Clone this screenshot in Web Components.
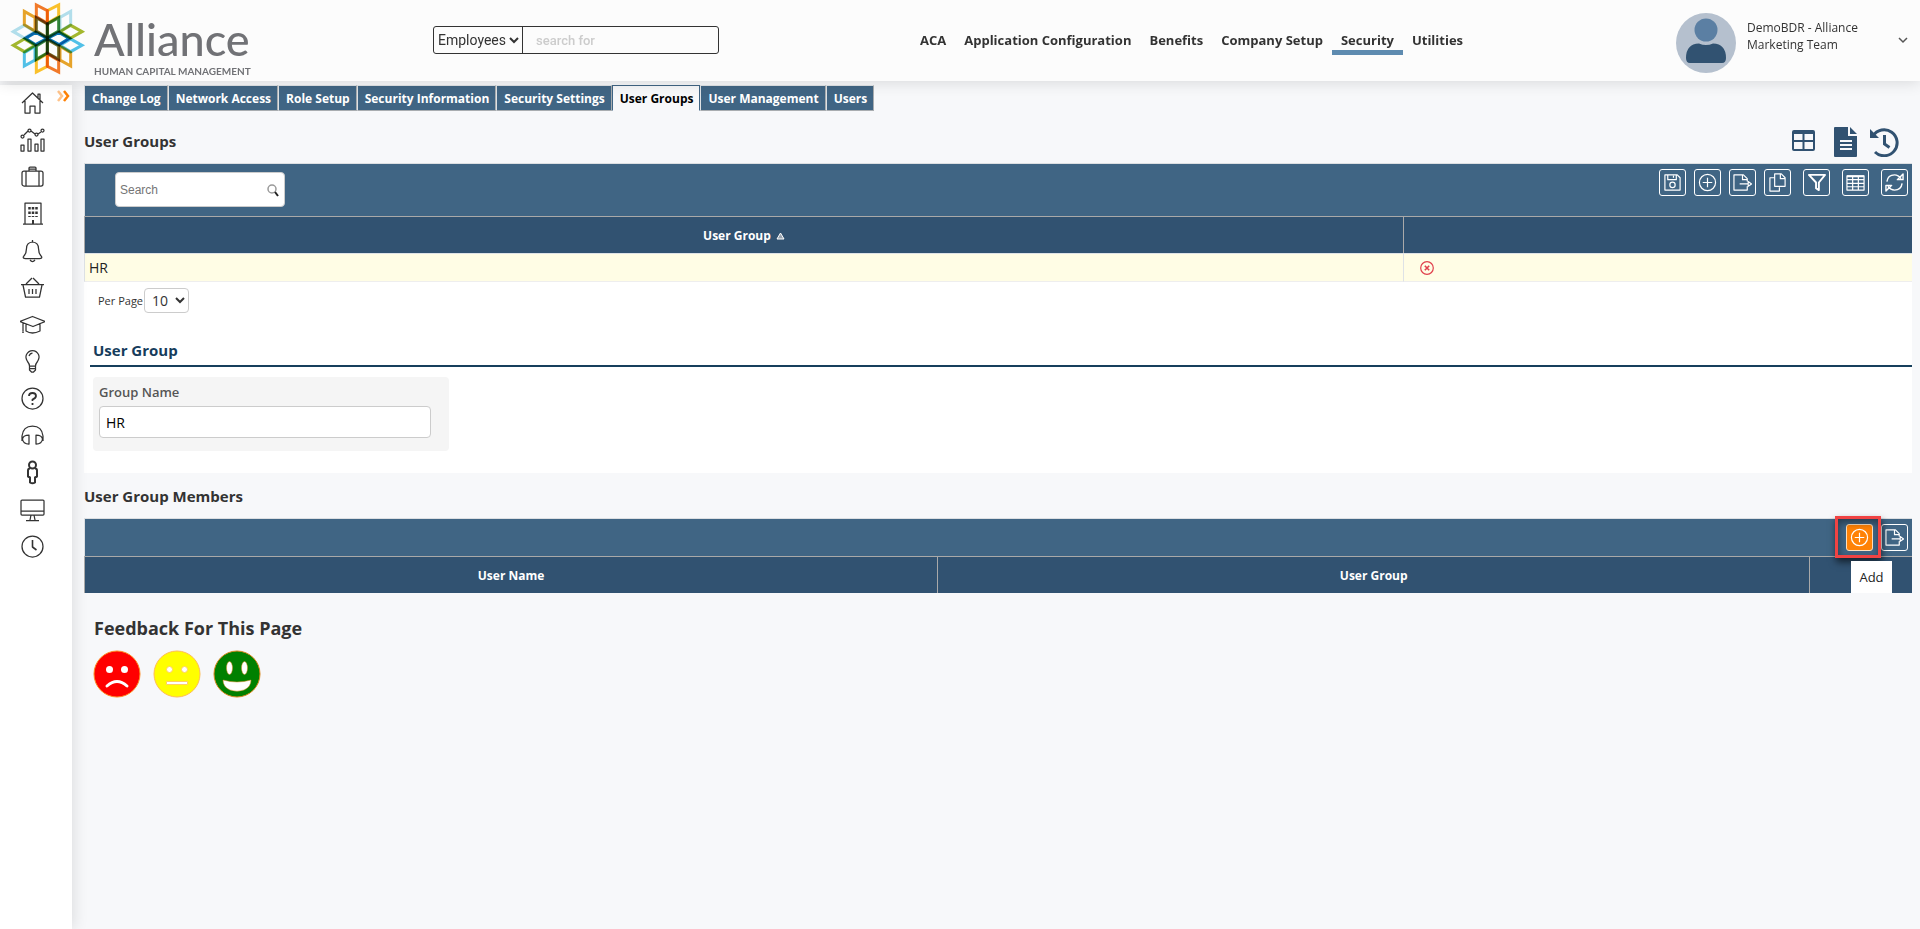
<!DOCTYPE html>
<html lang="en">
<head>
<meta charset="utf-8">
<title>Alliance HCM - User Groups</title>
<style>
html,body{margin:0;min-height:100%}
body{background:#f7f8fa;color:#333;font-family:"Open Sans","Noto Sans",sans-serif;font-size:13px}
</style>
</head>
<body>
<hcm-app></hcm-app>
<script>
const define=(name,html,setup)=>{
  const t=document.createElement('template');
  t.innerHTML='<style>*{box-sizing:border-box}button{font:inherit;color:inherit;cursor:pointer;margin:0}a{color:inherit;text-decoration:none}svg{display:block}</style>'+html;
  customElements.define(name,class extends HTMLElement{
    constructor(){super();this.attachShadow({mode:'open'}).append(t.content.cloneNode(true));}
    connectedCallback(){if(setup)setup(this,this.shadowRoot);}
  });
};

const ICONS={
  home:'<path d="M2 13 12.500 3 23 13M5 11v12h5v-7h5v7h5V11M18 8V4h2v6"/>',
  chart:'<path d="M1 18h3v6H1zM8 12h3v12H8zM15 17h3v7h-3zM21 12h3v12h-3zM4 8l4-4M11 4l4 3M18 7l3-2"/><circle cx="2.500" cy="9.500" r="1.500"/><circle cx="9.500" cy="3.500" r="1.500"/><circle cx="16.500" cy="7.500" r="1.500"/><circle cx="22.500" cy="3.500" r="1.500"/>',
  suitcase:'<rect x="2" y="7" width="21" height="15" rx="2"/><path d="M6 7v15M19 7v15M9 7V4q0-1 1-1h5q1 0 1 1v3M9 5h7"/>',
  building:'<path d="M5 23V2h16v21M3 23h20"/><path stroke-width="2.500" stroke-dasharray="2.500 2" d="M9.500 6v10M13 6v10M16.500 6v10"/><path stroke-width="2" d="M13 19v4"/>',
  bell:'<path d="M12.500 2v2M3.500 18.500q3-3 3-8 0-6 6-6.500 6 .5 6 6.500 0 5 3 8 1 2-2 2h-14q-3 0-2-2M10 22q2.500 3 5 0"/>',
  basket:'<path d="M1 9.500h23M3 10l2.500 12h14L22 10M6 9l6-6M19 9l-6-6M9 14v5M12.500 14v5M16 14v5"/>',
  cap:'<path d="M12.500 4.500 25 9.500l-12 5-13-5zM6 12v7q6 4 14 0v-7M3 11v8M2 20h2M20 11v6"/>',
  bulb:'<path d="M9.500 17q0-2-2-4.500-2.500-4-1-7 2-4 6-4t6 4q1.500 3-1 7-2 2.500-2 4.500zM9.500 17v4l2 2h2l2-2v-4M9.500 19.500h6M9 7q1-3 3.500-3"/>',
  help:'<circle cx="12.500" cy="12.500" r="10.500"/><path stroke-width="1.800" d="M9 10q0-3 3.500-3t3.500 3q0 2-3.500 3.500v1.500M12.500 17v2"/>',
  headset:'<path d="M2 18v-5q1-10 10.500-10T23 13v5M9 12v9q-6 0-6.500-5Q3 12 9 12zM16 12v9q6 0 6.500-5-.5-4-6.500-4z"/>',
  person:'<g stroke-width="2"><circle cx="12.500" cy="5" r="3.500"/><path d="M10 8.500q-2 0-2 2v6l2 1v5q2.500 1.500 5 0v-5l2-1v-6q0-2-2-2"/></g>',
  monitor:'<rect x="1" y="3" width="23" height="15" rx="1"/><path d="M1 14h23M11 18l-1 5M14 18l1 5M6 23.500h13"/>',
  clock:'<circle cx="12.500" cy="12.500" r="10.500"/><path stroke-width="1.600" d="M12.500 6v7l4 3"/>',
  save:'<path d="M2 2h13l3 3v13H2zM5 2v5h9V2M11 3v2"/><circle cx="10" cy="12.500" r="2.800"/>',
  add:'<circle cx="10" cy="10" r="8.500"/><path d="M10 5v10M5 10h10"/>',
  export:'<path d="M15 9V6l-4-4H1v16h14v-4M10 2v5h5M7 11.500h9M16 9l3.500 2.500-3.500 2.500z"/>',
  copy:'<path d="M7 1h7l4 4v9H7zM13 1v5h5M7 5H2v14h10v-4"/>',
  filter:'<path stroke-width="2" d="M2 2h17l-6.500 8v8l-3-2v-6z"/>',
  table:'<path d="M1 3h18v15H1zM1 7h18M1 11h18M1 14.500h18M7 3v15M13 3v15"/><path stroke-width="2" d="M1 3.500h18"/>',
  refresh:'<path stroke-width="1.500" d="M2 9Q3 2 10 2q4 0 7 4M18 11q-1 7-8 7-4 0-7-4M19 1v6h-6zM1 19v-6h6z"/>'
};
define('hcm-icon',`<style>:host{display:block}svg{width:var(--s,25px);height:var(--s,25px);fill:none;stroke:currentColor;stroke-width:1.250;stroke-linejoin:round}</style><svg aria-hidden="true"></svg>`,
(h,r)=>{const s=r.querySelector('svg'),small=h.hasAttribute('small');s.setAttribute('viewBox',small?'0 0 20 20':'0 0 25 25');s.innerHTML=ICONS[h.getAttribute('name')];});

define('hcm-logo',`<style>
:host{display:flex;gap:8px;align-items:flex-start;padding:2px 0 0 10px;color:#717276;font-family:Lato,sans-serif}
.star{width:76px;height:73px;flex:none;overflow:visible}
.star path{fill:none;stroke-width:9;mix-blend-mode:multiply}
.word{font-size:45px;line-height:52px;font-weight:500;padding-top:11px}.sub{font-size:10px;line-height:12px;font-weight:700;white-space:nowrap}
</style>
<svg class="star" viewBox="30 6 228 219" role="img" aria-label="Alliance logo">
<path stroke="#b4e1ee" d="M40 95 73 76l32 19-32 19zM212 34v40l-32 19V52z"/>
<path stroke="#e9a52a" d="M73 34v40l32 19V52zM212 198v-40l-32-19v41z"/>
<path stroke="#f47b2a" d="M109 15v35l33 20V32zM176 216v-35l-34-20v38z"/>
<path stroke="#fdc42c" d="M176 15v35l-34 20V32zM109 216v-35l33-20v38z"/>
<path stroke="#a5b92e" d="M246 95 212 76l-32 19 32 19zM40 136l33-19 32 19-32 19z"/>
<path stroke="#52c3ea" d="M246 136l-34-19-32 19 32 19zM73 198v-40l32-19v41z"/>
<path stroke="#75702b" d="M109 53v40l33 20V72zM176 178v-40l-34-20v41z"/>
<path stroke="#388c3c" d="M176 53v40l-34 20V72zM109 178v-40l33-20v41z"/>
<path stroke="#0873b5" d="M76 115l31-18 35 18-35 19zM208 115l-31-18-35 18 35 19z"/>
</svg>
<div><div class="word">Alliance</div><div class="sub">HUMAN CAPITAL MANAGEMENT</div></div>`);

define('hcm-header',`<style>
:host{display:grid;grid-template-columns:433px 286px 1fr 244px;height:81px;background:#fcfcfc;box-shadow:0 2px 14px #0000001f;position:relative;z-index:1}
.find{display:flex;height:28px;margin-top:26px;border:1px solid #333;border-radius:3px;overflow:hidden}
.find select{width:89px;border:0;border-right:1px solid #333;background:none;font:14px Roboto,sans-serif;color:#333;padding:0;height:26px}
.find input{flex:1;min-width:0;border:0;background:none;font:500 13px Roboto,sans-serif;padding:0 13px}
.find input::placeholder{color:#ccc}
nav{display:flex;padding:30px 0 0 192px;font-weight:700;font-size:13px;line-height:20px;align-items:flex-start;white-space:nowrap}
nav a{padding:0 9px;border-bottom:5px solid transparent}nav a.on{border-color:#5e8bb0}
.user{display:flex;gap:11px;padding-top:13px;position:relative}
.user span{font-size:12px;line-height:17px;padding-top:6px;width:130px}
.user button{border:0;background:none;padding:0;position:absolute;right:12px;top:36px}
</style>
<hcm-logo></hcm-logo>
<form class="find"><select aria-label="Search in"><option>Employees</option></select><input aria-label="Search for" placeholder="search for"></form>
<nav><a href="#">ACA</a><a href="#">Application Configuration</a><a href="#">Benefits</a><a href="#">Company Setup</a><a href="#" class="on">Security</a><a href="#">Utilities</a></nav>
<div class="user"><svg width="60" height="60" viewBox="0 0 60 60"><circle cx="30" cy="30" r="30" fill="#b5c0ce"/><circle cx="30" cy="17" r="11.500" fill="#5b7fa3"/><path fill="#315271" d="M10 45q0-14 13-14.500 7 3 14 0Q50 31 50 45q0 5-4 5H14q-4 0-4-5z"/></svg>
<span>DemoBDR - Alliance<br>Marketing Team</span>
<button aria-label="Account menu"><svg width="10" height="8" fill="none" stroke="#555" stroke-width="1.500"><path d="M1 2l4 4 4-4"/></svg></button></div>`);

define('hcm-side',`<style>
:host{display:block;background:#fff;box-shadow:2px 0 14px #0000001c;position:relative;padding-top:5px;color:#333}
nav{display:flex;flex-direction:column;gap:12px;padding-left:20px}a{width:25px;height:25px}
.more{position:absolute;top:5px;right:2px;border:0;background:none;padding:0}
</style><nav></nav><button class="more" aria-label="Expand menu"><svg width="14" height="12" fill="none" stroke-width="2.500"><path stroke="#ffc38a" d="M2 1l4 5-4 5"/><path stroke="#ff8206" d="M8 1l4 5-4 5"/></svg></button>`,
(h,r)=>{r.querySelector('nav').innerHTML=['home','chart','suitcase','building','bell','basket','cap','bulb','help','headset','person','monitor','clock'].map(n=>`<a href="#" aria-label="${n}"><hcm-icon name="${n}"></hcm-icon></a>`).join('');});

define('hcm-tabs',`<style>
:host{display:flex;height:26px;font-size:12px;font-weight:700;line-height:24px;white-space:nowrap}
a{background:#406584;color:#fff;padding:1px 6px 0 7px;border:1px solid #a9adb0;border-top-color:#dfe2e5;border-left-color:#dfe2e5}
a.on{background:#f7f8fa;color:#000;border-color:#406584;border-bottom-color:transparent}
</style>`,(h,r)=>{for(const n of ['Change Log','Network Access','Role Setup','Security Information','Security Settings','User Groups','User Management','Users']){const a=document.createElement('a');a.href='#';a.textContent=n;if(n==='User Groups')a.className='on';r.append(a);}});

define('hcm-tool',`<style>
:host{display:block}button{display:block;width:27px;height:27px;padding:3px 3px;border:1px solid #fff;border-radius:3px;background:none;color:#fff}
:host([active]) button{background:#ff8206;border-color:#ffe0bd}hcm-icon{--s:19px}
</style><button><hcm-icon small></hcm-icon></button>`,
(h,r)=>{const n=h.getAttribute('name');r.querySelector('button').setAttribute('aria-label',n);const o=r.querySelector('hcm-icon'),i=document.createElement('hcm-icon');i.setAttribute('small','');i.setAttribute('name',n);o.replaceWith(i);});

const GRID=`:host{display:block}
.bar{display:flex;align-items:flex-start;background:#406584;border:1px solid #dcdfe2;border-right:0;border-bottom:0;padding:5px 4px 0 30px}
.tools{display:flex;gap:8px;margin-left:auto}
table{width:100%;border-collapse:separate;border-spacing:0;table-layout:fixed;background:#fff}
th{background:#315271;color:#fff;height:37px;font-size:12px;font-weight:700;padding:0;border-top:1px solid #a9a9a9;border-left:1px solid #a9a9a9}
td{background:#fffde5;height:29px;font-size:14px;padding:0 4px;color:#222;border-left:1px solid #dee2e6;border-top:1px solid #dee2e6;border-bottom:1px solid #eee}`;

define('hcm-groups-grid',`<style>${GRID}
.bar{height:53px}.search{display:flex;align-items:center;width:170px;height:35px;margin-top:3px;background:#fff;border:1px solid #ccc;border-radius:4px;padding-right:5px}
.search input{border:0;background:none;width:100%;min-width:0;padding:0 4px;font:12px "Liberation Sans",sans-serif}
.search input::placeholder{color:#757575}
.tools .w{margin-left:4px}th svg{display:inline-block;margin-left:5px}.del{display:block;border:0;background:none;padding:0;margin-left:12px;color:#e0404c}
.pager{display:flex;align-items:center;gap:1px;padding:6px 14px;font-size:11px;line-height:15px}
.pager select{width:45px;height:25px;border:1px solid #ccc;border-radius:4px;background:#fff;font:14px "Open Sans",sans-serif;color:#333;padding:0 0 0 3px}
</style>
<div class="bar"><div class="search"><input aria-label="Search grid" placeholder="Search"><svg width="14" height="14" fill="none"><circle cx="6" cy="6" r="4" stroke="#999" stroke-width="1.500"/><path d="M9 9l3 4" stroke="#222" stroke-width="2"/></svg></div>
<div class="tools"><hcm-tool name="save"></hcm-tool><hcm-tool name="add"></hcm-tool><hcm-tool name="export"></hcm-tool><hcm-tool name="copy"></hcm-tool><hcm-tool class="w" name="filter"></hcm-tool><hcm-tool class="w" name="table"></hcm-tool><hcm-tool class="w" name="refresh"></hcm-tool></div></div>
<table><colgroup><col style="width:72.150%"><col></colgroup><thead><tr><th>User Group<svg width="9" height="8"><path d="M4.500 1 8 7H1z" fill="#9aa5b1" stroke="#fff"/></svg></th><th></th></tr></thead>
<tbody><tr><td>HR</td><td><button class="del" aria-label="Delete"><svg width="14" height="14" fill="none" stroke="currentColor"><circle cx="7" cy="7" r="6.300" stroke-width="1.200"/><path d="M4.800 4.800l4.400 4.400M9.200 4.800 4.800 9.200" stroke-width="1.600"/></svg></button></td></tr></tbody></table>
<div class="pager"><label for="pp">Per Page</label><select id="pp"><option>10</option></select></div>`);

define('hcm-group-form',`<style>
:host{display:block;padding:19px 0 22px 6px}
h3{margin:0 0 10px;padding:0 3px 3px;font-size:15px;line-height:24px;font-weight:700;color:#163c5c;border-bottom:2px solid #163f5c}
.card{margin-left:3px;width:356px;height:74px;background:#f5f5f5;border-radius:4px;padding:5px 18px 0 6px}
label{display:block;font-size:13px;line-height:20px;font-weight:600;color:#555;margin-bottom:4px}
input{display:block;width:100%;height:32px;border:1px solid #ccc;border-radius:4px;background:#fff;padding:0 6px;font:14px "Open Sans",sans-serif;color:#000}
</style><h3>User Group</h3><div class="card"><label for="gn">Group Name</label><input id="gn" value="HR"></div>`);

define('hcm-members-grid',`<style>${GRID}
:host{position:relative}.bar{height:38px}
.mark{position:absolute;right:31px;top:-2px;width:46px;height:42px;border:3px solid #f04343;box-shadow:1px 4px 7px #0009,inset 1px 4px 7px #0006;pointer-events:none}
.tip{position:absolute;right:20px;bottom:0;width:41px;background:#fff;color:#222;font-size:13px;line-height:32px;text-align:center}
</style>
<div class="bar"><div class="tools"><hcm-tool name="add" active></hcm-tool><hcm-tool name="export"></hcm-tool></div></div>
<table><colgroup><col style="width:46.670%"><col style="width:47.710%"><col></colgroup><thead><tr><th>User Name</th><th>User Group</th><th></th></tr></thead></table>
<div class="mark"></div><div class="tip" role="tooltip">Add</div>`);

define('hcm-feedback',`<style>
:host{display:block;padding:21px 9px}h2{margin:0 0 8px;padding-left:1px;font-size:18px;line-height:28px;font-weight:700}
div{display:flex;gap:12px}button{border:0;background:none;padding:0}
</style><h2>Feedback For This Page</h2><div>
<button aria-label="Unhappy"><svg width="48" height="48"><circle cx="24" cy="24" r="23" fill="red" stroke="#ff8a20"/><g fill="#fff"><circle cx="16.500" cy="19.500" r="3.500"/><circle cx="31.500" cy="19.500" r="3.500"/></g><path d="M14 36q10-9 20 0" fill="none" stroke="#fff" stroke-width="3" stroke-linecap="round"/></svg></button>
<button aria-label="Neutral"><svg width="48" height="48"><circle cx="24" cy="24" r="23" fill="#ff0" stroke="#ffbd55"/><g fill="#fff" stroke="#ffd060"><circle cx="16.500" cy="19.500" r="3"/><circle cx="31.500" cy="19.500" r="3"/><path d="M13.500 31.500h21v3h-21z"/></g></svg></button>
<button aria-label="Happy"><svg width="48" height="48"><circle cx="24" cy="24" r="23" fill="green" stroke="#d9861a"/><g fill="#fff" stroke="#d9861a" stroke-width=".5"><ellipse cx="16.500" cy="18" rx="3" ry="6.500"/><ellipse cx="31.500" cy="18" rx="3" ry="6.500"/><path d="M10 30q14 4 28 0 0 7-7 10-7 2.500-14 0-7-3-7-10z"/></g></svg></button></div>`);

define('hcm-app',`<style>
:host{display:flex;flex-direction:column;min-height:100vh}
.body{flex:1;display:grid;grid-template-columns:72px 1fr}
hcm-side{margin-top:4px}
main{padding:4px 8px 0 12px;min-width:0}
.head{display:flex;align-items:center;justify-content:space-between;height:52px}
h2{margin:0;font-size:15px;line-height:24px;font-weight:700}
.head h2{padding-top:8px}
.acts{display:flex;align-items:center;padding:10px 13px 0 0;color:#315271}.acts button{border:0;background:none;padding:0}
.acts button:nth-child(2){margin:0 13px 0 19px}.acts button:first-child{margin-top:-4px}
section{background:#fff}h2.m{padding:11px 0 10px}
</style>
<hcm-header></hcm-header>
<div class="body"><hcm-side></hcm-side><main><hcm-tabs></hcm-tabs>
<div class="head"><h2>User Groups</h2><div class="acts">
<button aria-label="Grid view"><svg width="23" height="21" fill="none" stroke="currentColor" stroke-width="2"><rect x="1" y="1" width="21" height="19" rx="1"/><path d="M11.500 3v17M1 11h21"/><path stroke-width="3" d="M1 2.500h21"/></svg></button>
<button aria-label="Document"><svg width="23" height="30" fill="currentColor"><path d="M1 0h13v9h9v20q0 1-1 1H1q-1 0-1-1V1q0-1 1-1zM16 0l7 7h-7z"/><path d="M6 14h12M6 18h12M6 22h12" stroke="#f7f8fa" stroke-width="1.800"/></svg></button>
<button aria-label="History"><svg width="29" height="29" fill="none" stroke="currentColor" stroke-width="3"><path d="M3 8A13 13 0 1 1 5 24M14.500 7v9l5 3.500"/><path d="M0 1v9h9z" fill="currentColor" stroke="none"/></svg></button></div></div>
<section><hcm-groups-grid></hcm-groups-grid><hcm-group-form></hcm-group-form></section>
<h2 class="m">User Group Members</h2><hcm-members-grid></hcm-members-grid><hcm-feedback></hcm-feedback></main></div>`);
</script>
</body>
</html>
